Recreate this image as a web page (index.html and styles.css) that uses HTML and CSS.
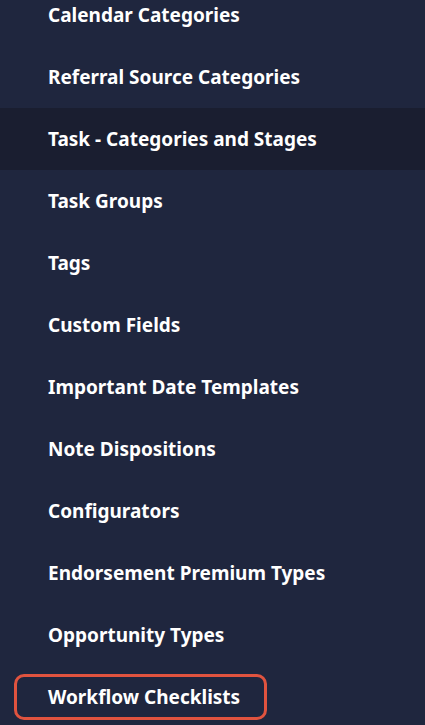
FILE: index.html
```html
<!DOCTYPE html>
<html>
<head>
<meta charset="utf-8">
<link rel="stylesheet" href="styles.css">
</head>
<body>
<nav class="menu">
  <a class="item">Calendar Categories</a>
  <a class="item">Referral Source Categories</a>
  <a class="item active">Task - Categories and Stages</a>
  <a class="item">Task Groups</a>
  <a class="item">Tags</a>
  <a class="item">Custom Fields</a>
  <a class="item">Important Date Templates</a>
  <a class="item">Note Dispositions</a>
  <a class="item">Configurators</a>
  <a class="item">Endorsement Premium Types</a>
  <a class="item">Opportunity Types</a>
  <a class="item highlight"><span class="outline">Workflow Checklists</span></a>
</nav>
</body>
</html>
```
FILE: styles.css
```css
html, body {
  margin: 0;
  padding: 0;
  background: #1f263e;
  height: 100%;
  overflow: hidden;
}
.menu {
  display: flex;
  flex-direction: column;
  margin-top: -16px;
  font-family: "Noto Sans", "Open Sans", sans-serif;
  font-weight: 700;
  font-size: 19px;
  color: #ffffff;
}
.item {
  display: flex;
  align-items: center;
  height: 62px;
  padding-left: 48px;
  box-sizing: border-box;
  white-space: nowrap;
}
.item.active {
  background: #1a1e30;
}
.item.highlight {
  padding-left: 14px;
}
.outline {
  display: flex;
  align-items: center;
  width: 253px;
  height: 46px;
  box-sizing: border-box;
  padding-left: 31px;
  border: 3px solid #e0533f;
  border-radius: 10px;
}
```
